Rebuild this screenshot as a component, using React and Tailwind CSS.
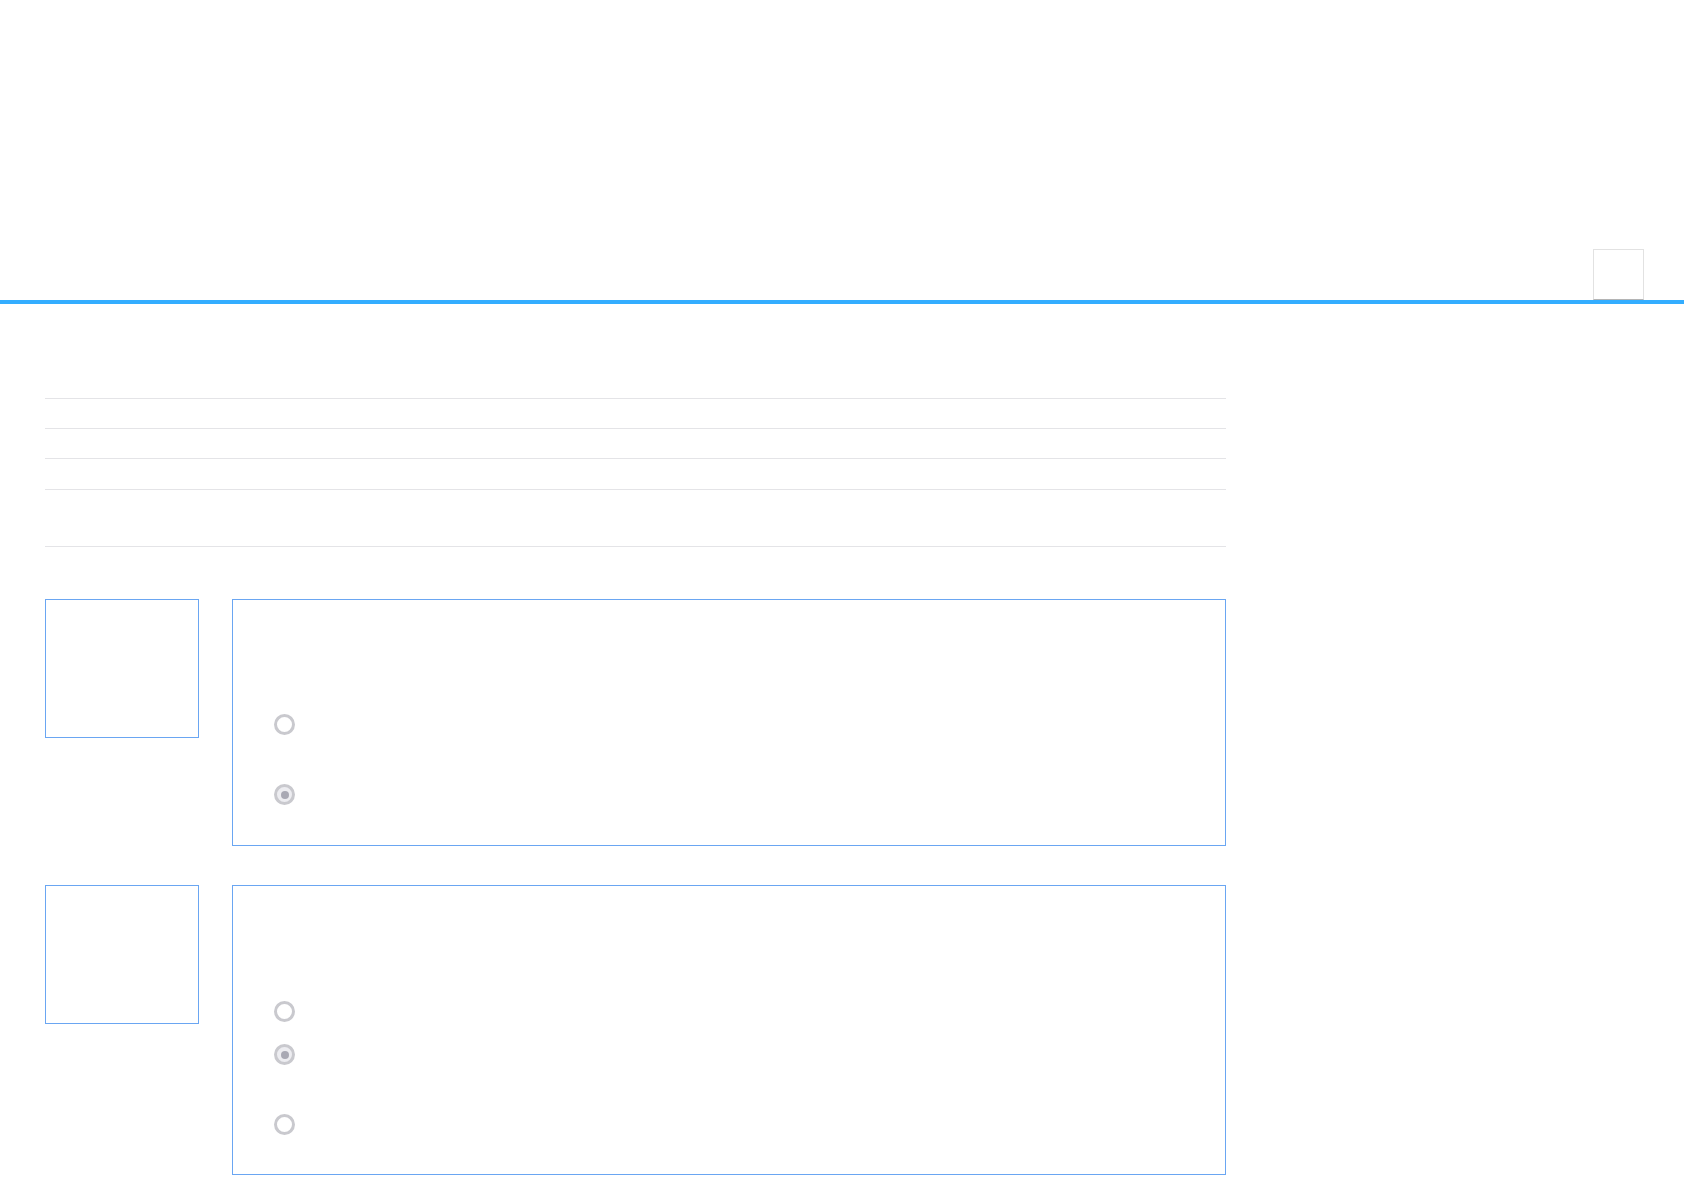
import React from 'react';

function Radio({ checked }) {
  return (
    <div
      className={`flex items-center justify-center w-[21px] h-[21px] rounded-full border-[3px] border-[#c9c9ce] ${
        checked ? 'bg-[#ededf1]' : 'bg-white'
      }`}
    >
      {checked && <div className="w-2 h-2 rounded-full bg-[#a9a9b4]" />}
    </div>
  );
}

function Question({ heightClass, boxClass, children }) {
  return (
    <div className="flex gap-[33px]">
      <div className="w-[154px] h-[139px] shrink-0 border border-[#6aa6f2]" />
      <div className={`flex-1 border border-[#6aa6f2] pl-[41px] ${heightClass}`}>
        <div className={boxClass}>{children}</div>
      </div>
    </div>
  );
}

export default function App() {
  return (
    <div className="min-h-[1192px] bg-white" style={{ fontFamily: '"Liberation Sans", sans-serif' }}>
      <header className="h-[304px] border-b-4 border-[#33adff] flex justify-end items-end pr-[40px]">
        <div className="w-[51px] h-[51px] border border-[#e2e2e2] border-b-[#b4b4b4]" />
      </header>

      <main className="w-[1181px] ml-[45px] pt-[94px]">
        <div className="flex flex-col">
          <div className="h-[30px] border-t border-[#e4e4e7]" />
          <div className="h-[30px] border-t border-[#e4e4e7]" />
          <div className="h-[31px] border-t border-[#e4e4e7]" />
          <div className="h-[57px] border-t border-[#e4e4e7]" />
          <div className="border-t border-[#e4e4e7]" />
        </div>

        <div className="mt-[52px] flex flex-col gap-[39px]">
          <Question heightClass="h-[247px]" boxClass="pt-[114px] flex flex-col gap-[49px]">
            <Radio />
            <Radio checked />
          </Question>

          <Question heightClass="h-[290px]" boxClass="pt-[115px] flex flex-col">
            <Radio />
            <div className="mt-[22px]">
              <Radio checked />
            </div>
            <div className="mt-[49px]">
              <Radio />
            </div>
          </Question>
        </div>
      </main>
    </div>
  );
}
